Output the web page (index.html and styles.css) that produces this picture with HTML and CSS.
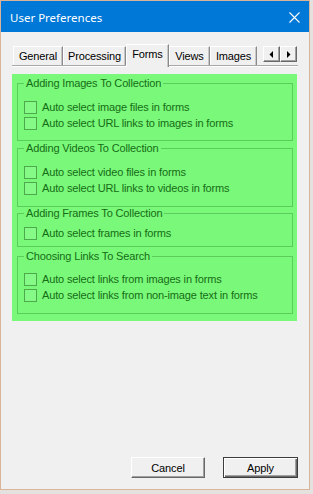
FILE: index.html
```html
<!DOCTYPE html>
<html>
<head>
<meta charset="utf-8">
<link rel="stylesheet" href="styles.css">
</head>
<body>
<div class="window">
  <div class="titlebar">
    <span class="title">User Preferences</span>
    <svg class="close" width="11" height="11" viewBox="0 0 11 11"><path d="M0.5 0.5 L10.5 10.5 M10.5 0.5 L0.5 10.5" stroke="#fff" stroke-width="1.1" fill="none"/></svg>
  </div>
  <div class="content">
    <div class="tabstrip">
      <div class="tab tab-general">General</div>
      <div class="tab tab-processing">Processing</div>
      <div class="tab tab-forms active">Forms</div>
      <div class="tab tab-views">Views</div>
      <div class="tab tab-images">Images</div>
      <div class="arrows">
        <div class="arrow"><svg width="5" height="7" viewBox="0 0 5 7"><path d="M4 0 L4 7 L0.5 3.5 Z" fill="#000"/></svg></div>
        <div class="arrow"><svg width="5" height="7" viewBox="0 0 5 7"><path d="M1 0 L1 7 L4.5 3.5 Z" fill="#000"/></svg></div>
      </div>
    </div>
    <div class="panel">
      <div class="green">
        <fieldset class="group g1">
          <legend>Adding Images To Collection</legend>
          <label class="row"><span class="box"></span>Auto select image files in forms</label>
          <label class="row"><span class="box"></span>Auto select URL links to images in forms</label>
        </fieldset>
        <fieldset class="group g2">
          <legend>Adding Videos To Collection</legend>
          <label class="row"><span class="box"></span>Auto select video files in forms</label>
          <label class="row"><span class="box"></span>Auto select URL links to videos in forms</label>
        </fieldset>
        <fieldset class="group g3">
          <legend>Adding Frames To Collection</legend>
          <label class="row"><span class="box"></span>Auto select frames in forms</label>
        </fieldset>
        <fieldset class="group g4">
          <legend>Choosing Links To Search</legend>
          <label class="row"><span class="box"></span>Auto select links from images in forms</label>
          <label class="row"><span class="box"></span>Auto select links from non-image text in forms</label>
        </fieldset>
      </div>
    </div>
    <div class="buttons">
      <div class="btn">Cancel</div>
      <div class="btn default">Apply</div>
    </div>
  </div>
</div>
</body>
</html>
```
FILE: styles.css
```css
html, body {
  margin: 0;
  padding: 0;
  background: #e4e1de;
}
body {
  width: 313px;
  height: 494px;
  overflow: hidden;
  font-family: "Liberation Sans", Arial, sans-serif;
  font-size: 11px;
  letter-spacing: -0.15px;
  color: #000;
}
.window {
  width: 308px;
  height: 488px;
  border: 1px solid #d9b498;
  background: #f0f0f0;
  display: flex;
  flex-direction: column;
}
.titlebar {
  height: 31px;
  background: #0078d7;
  display: flex;
  align-items: center;
  justify-content: space-between;
  padding: 0 9px 0 9px;
  flex-shrink: 0;
}
.title {
  font-family: "Noto Sans", "Liberation Sans", sans-serif;
  font-size: 11.5px;
  letter-spacing: 0;
  color: #fff;
  padding-top: 1px;
}
.close {
  display: block;
  margin-top: 2px;
}
.content {
  flex: 1;
  display: flex;
  flex-direction: column;
}
.tabstrip {
  margin: 11px 11px 0 11px;
  height: 22px;
  display: flex;
  align-items: flex-end;
  border-bottom: 1px solid #a8a8a8;
  box-shadow: 0 1px 0 #ffffff;
  padding-left: 1px;
}
.tab {
  box-sizing: border-box;
  height: 19px;
  border-top: 1px solid #ffffff;
  border-left: 1px solid #ffffff;
  border-right: 1px solid #8a8a8a;
  box-shadow: inset -1px 0 0 #c8c8c8;
  background: #f0f0f0;
  text-align: center;
  line-height: 18px;
  white-space: nowrap;
}
.tab-general { width: 50px; }
.tab-processing { width: 63px; }
.tab-forms { width: 43px; }
.tab-views { width: 41px; }
.tab-images { width: 47px; }
.tab.active {
  position: relative;
  z-index: 1;
  height: 23px;
  margin-bottom: -2px;
  line-height: 18px;
  padding-bottom: 4px;
}
.arrows {
  align-self: flex-start;
  margin-top: 3px;
  margin-left: 6px;
  display: flex;
}
.arrow {
  box-sizing: border-box;
  width: 17px;
  height: 16px;
  border-top: 1px solid #fff;
  border-left: 1px solid #fff;
  border-right: 1px solid #696969;
  border-bottom: 1px solid #696969;
  box-shadow: inset -1px -1px 0 #a0a0a0;
  background: #f0f0f0;
  display: flex;
  align-items: center;
  justify-content: center;
}
.panel {
  padding: 8px 0 0 11px;
}
.green {
  width: 285px;
  box-sizing: border-box;
  background: #7af87a;
  padding: 3px 4px 7px 5px;
  color: #156d15;
}
.group {
  margin: 0;
  border: 1px solid #5ccc5c;
  padding: 9px 6px 9px 6px;
  min-width: 0;
}
.group legend {
  padding: 0 2px;
  margin-left: 0;
  line-height: 13px;
  font-size: 11px;
}
.g2 { margin-top: 1px; padding-bottom: 10px; }
.g3 { padding-top: 5px; padding-bottom: 5px; }
.g4 { margin-top: 3px; padding-top: 8px; padding-bottom: 10px; }
.row {
  box-sizing: border-box;
  display: flex;
  align-items: center;
  height: 16px;
  gap: 5px;
  white-space: nowrap;
  line-height: 16px;
}
.box {
  box-sizing: border-box;
  width: 13px;
  height: 13px;
  border: 1px solid #4caa4c;
  background: #86fa86;
  flex-shrink: 0;
}
.buttons {
  margin-top: auto;
  display: flex;
  justify-content: flex-end;
  gap: 18px;
  padding: 0 11px 11px 0;
}
.btn {
  box-sizing: border-box;
  width: 74px;
  height: 21px;
  display: flex;
  align-items: center;
  justify-content: center;
  background: #f0f0f0;
  border-top: 1px solid #ffffff;
  border-left: 1px solid #ffffff;
  border-right: 1px solid #696969;
  border-bottom: 1px solid #696969;
  box-shadow: inset -1px -1px 0 #a0a0a0;
}
.btn.default {
  width: 75px;
  border: 1px solid #3c3c3c;
  box-shadow: inset 1px 1px 0 #fff, inset -1px -1px 0 #6a6a6a, inset -2px -2px 0 #a0a0a0;
}
```
